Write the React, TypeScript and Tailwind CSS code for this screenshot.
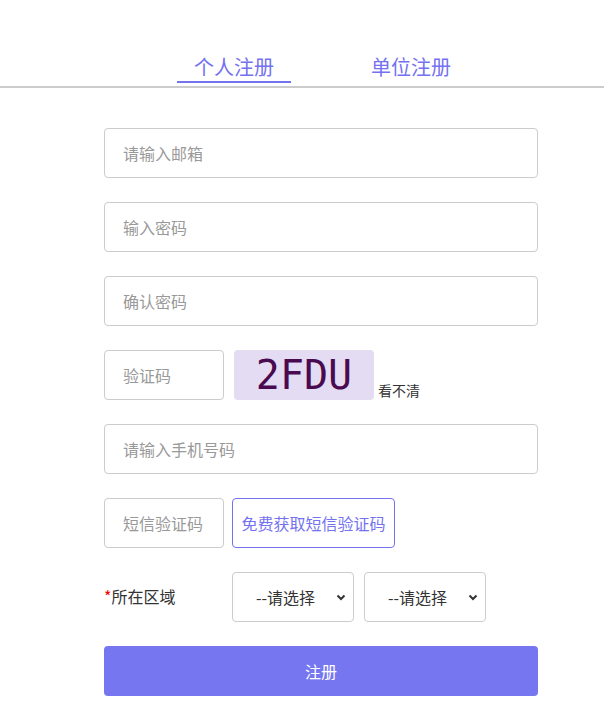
import React from 'react';

const font = { fontFamily: '"Microsoft YaHei", "Noto Sans CJK SC", "Noto Sans", sans-serif' };

const TextField: React.FC<{ placeholder: string; className?: string }> = ({ placeholder, className = 'w-full' }) => (
  <input
    type="text"
    placeholder={placeholder}
    className={`${className} h-[50px] rounded border border-[#cccccc] bg-white px-[18px] text-base text-[#333] outline-none placeholder:text-[#999]`}
  />
);

const RegionSelect: React.FC = () => (
  <div className="relative w-[122px] h-[50px]">
    <select className="w-full h-full appearance-none rounded border border-[#cccccc] bg-white pl-[23px] pr-6 text-base text-[#333] outline-none">
      <option>--请选择</option>
    </select>
    <svg
      className="pointer-events-none absolute right-[8px] top-[22px] h-[7px] w-[10px]"
      viewBox="0 0 10 7"
      fill="none"
      stroke="#333"
      strokeWidth="2"
    >
      <path d="M1.5 1.5 5 5l3.5-3.5" />
    </svg>
  </div>
);

export default function App() {
  return (
    <div className="min-h-screen w-full bg-white" style={font}>
      <div className="flex gap-[63px] pl-[177px] pt-[52px]">
        <div className="w-[114px] border-b-2 border-[#7572f0] text-center text-[20px] leading-[29px] text-[#7572f0]">
          个人注册
        </div>
        <div className="w-[114px] text-center text-[20px] leading-[29px] text-[#7572f0]">单位注册</div>
      </div>
      <div className="mt-[3px] h-[2px] bg-[#cccccc]" />

      <form className="ml-[104px] mt-[40px] flex w-[434px] flex-col gap-[24px]">
        <TextField placeholder="请输入邮箱" />
        <TextField placeholder="输入密码" />
        <TextField placeholder="确认密码" />

        <div className="flex items-end">
          <TextField placeholder="验证码" className="w-[120px]" />
          <div
            className="ml-[10px] flex h-[50px] w-[140px] items-center justify-center rounded bg-[#e4dcf2] text-[40px] leading-none text-[#4a0a50]"
            style={{ fontFamily: '"DejaVu Sans Mono", monospace' }}
          >
            2FDU
          </div>
          <span className="ml-[4px] text-sm leading-5 text-[#333]">看不清</span>
        </div>

        <TextField placeholder="请输入手机号码" />

        <div className="flex gap-[8px]">
          <TextField placeholder="短信验证码" className="w-[120px]" />
          <button
            type="button"
            className="h-[50px] w-[163px] rounded border border-[#7572f0] bg-white text-base text-[#7572f0]"
          >
            免费获取短信验证码
          </button>
        </div>

        <div className="flex items-start">
          <div className="w-[128px] pt-[12px] text-base leading-6 text-[#333]">
            <span className="text-[#e00]">*</span>所在区域
          </div>
          <div className="flex gap-[10px]">
            <RegionSelect />
            <RegionSelect />
          </div>
        </div>

        <button type="button" className="h-[50px] w-full rounded bg-[#7676f0] text-base text-white">
          注册
        </button>
      </form>
    </div>
  );
}
